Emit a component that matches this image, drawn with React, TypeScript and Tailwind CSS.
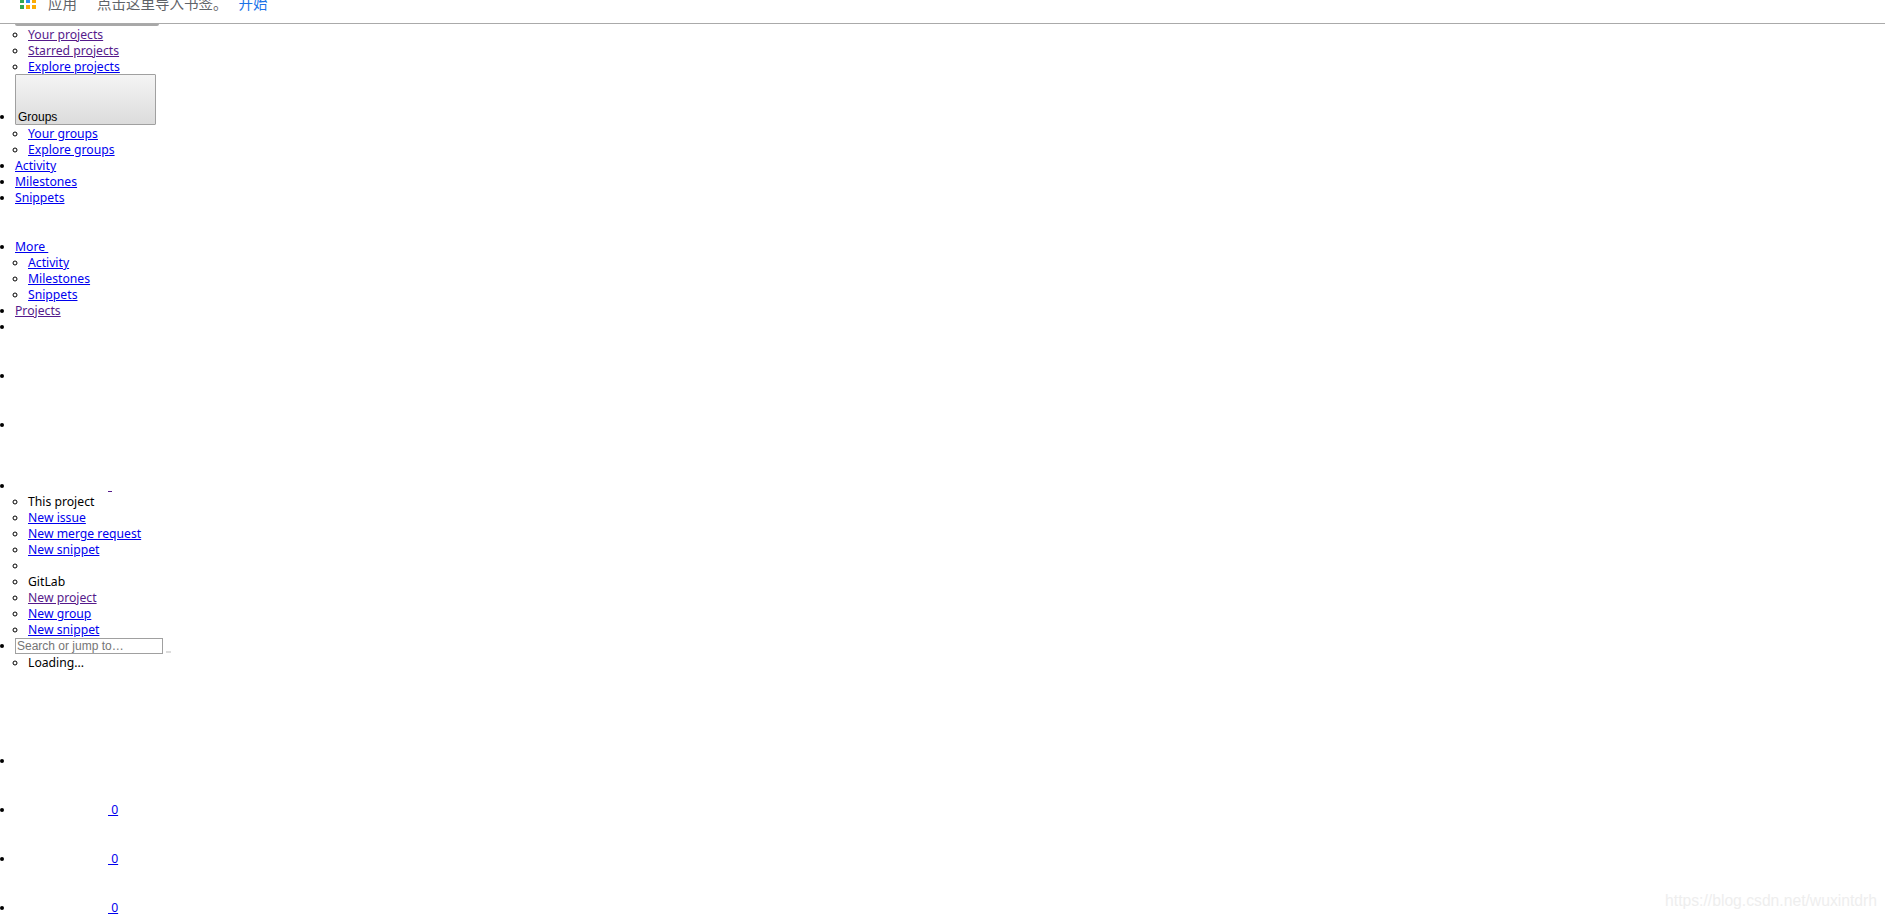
const textFont = "font-['Noto_Sans',sans-serif]";

function Link({ children }: { children: React.ReactNode }) {
  return <a href="#" className="text-[#0000ee] underline">{children}</a>;
}

function Visited({ children }: { children: React.ReactNode }) {
  return <a href="#" className="text-[#551a8b] underline">{children}</a>;
}

function BookmarkBar() {
  const colors = ['#ea4335', '#fbbc04', '#4285f4', '#34a853', '#2b8ef0', '#fbac04', '#34a853', '#fbac04', '#fbac04'];
  return (
    <div className="flex h-6 items-start overflow-hidden border-b border-[#aaaaaa] bg-white font-['Noto_Sans_CJK_SC',sans-serif] text-[14.5px] leading-5">
      <div className="mt-[-7px] ml-5 flex items-center">
        <div className="grid w-4 grid-cols-3 gap-[2px] self-start">
          {colors.map((c, i) => (
            <span key={i} className="h-1 w-1" style={{ backgroundColor: c }} />
          ))}
        </div>
        <span className="ml-3 text-[#5f6368]">应用</span>
        <span className="ml-5 text-[#5f6368]">点击这里导入书签。</span>
        <a href="#" className="ml-[11px] text-[#1a73e8]">开始</a>
      </div>
    </div>
  );
}

export default function App() {
  return (
    <div className={`relative h-[919px] overflow-hidden bg-white text-[12.2px] leading-4 text-black ${textFont}`}>
      <BookmarkBar />
      <div className="mb-px ml-[15px] h-[2px] w-36 rounded-b-sm bg-[#a8a8a8]" />
      <ul className="list-disc pl-[15px]">
        <li className="list-none">
          <ul className="list-[circle] pl-[13px]">
            <li><Visited>Your projects</Visited></li>
            <li><Visited>Starred projects</Visited></li>
            <li><Link>Explore projects</Link></li>
          </ul>
        </li>
        <li>
          <button className="mt-[-1px] mb-px flex h-[51px] w-[141px] items-end rounded-[1px] border border-[#a0a0a0] bg-gradient-to-b from-[#f4f4f4] to-[#dcdcdc] px-[2px] font-['Liberation_Sans',sans-serif] text-[12px] leading-[14px]">
            Groups
          </button>
          <ul className="list-[circle] pl-[13px]">
            <li><Link>Your groups</Link></li>
            <li><Link>Explore groups</Link></li>
          </ul>
        </li>
        <li><Link>Activity</Link></li>
        <li><Link>Milestones</Link></li>
        <li className="mb-[33px]"><Link>Snippets</Link></li>
        <li>
          <Link>More&nbsp;</Link>
          <ul className="list-[circle] pl-[13px]">
            <li><Link>Activity</Link></li>
            <li><Link>Milestones</Link></li>
            <li><Link>Snippets</Link></li>
          </ul>
        </li>
        <li><Visited>Projects</Visited></li>
        <li className="h-[49px]" />
        <li className="h-[49px]" />
        <li className="h-[61px]" />
        <li>
          <span className="ml-[93px] inline-block h-[14px] w-1 border-b border-[#551a8b] align-top" />
          <ul className="list-[circle] pl-[13px]">
            <li>This project</li>
            <li><Link>New issue</Link></li>
            <li><Link>New merge request</Link></li>
            <li><Link>New snippet</Link></li>
            <li className="h-4" />
            <li>GitLab</li>
            <li><Visited>New project</Visited></li>
            <li><Link>New group</Link></li>
            <li><Link>New snippet</Link></li>
          </ul>
        </li>
        <li>
          <div className="flex items-end">
            <input
              placeholder="Search or jump to…"
              className="h-4 w-[148px] border border-[#a0a0a0] px-[1px] font-['Liberation_Sans',sans-serif] text-[12px] placeholder:text-[#757575]"
            />
            <span className="mb-[1px] ml-[3px] h-[2px] w-[5px] bg-[#dddddd]" />
          </div>
          <ul className="list-[circle] pt-px pl-[13px]">
            <li>Loading...</li>
          </ul>
        </li>
        <li className="mt-[82px] h-[49px]" />
        <li className="h-[49px]"><span className="ml-[93px] text-[#0000ee] underline">&nbsp;0</span></li>
        <li className="h-[49px]"><span className="ml-[93px] text-[#0000ee] underline">&nbsp;0</span></li>
        <li className="h-[49px]"><span className="ml-[93px] text-[#0000ee] underline">&nbsp;0</span></li>
      </ul>
      <div className="absolute right-2 bottom-[10px] font-['Liberation_Sans',sans-serif] text-[15.7px] text-[#eeeeee]">
        https://blog.csdn.net/wuxintdrh
      </div>
    </div>
  );
}
